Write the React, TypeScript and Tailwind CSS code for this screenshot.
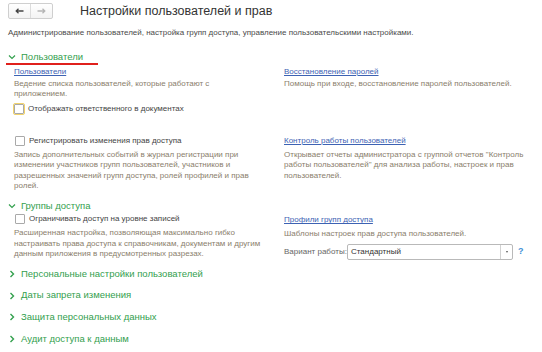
import React from "react";

const green = "text-[#33a04e]";
const desc = "text-[8px] leading-[10.4px] text-[#8a7e6c]";
const link = "text-[8px] leading-[10px] text-[#3d62b3] underline";

function ChevronDown() {
  return (
    <svg width="8" height="6" viewBox="0 0 8 6" className="mr-[5px] shrink-0">
      <path d="M1 1.5 L4 4.5 L7 1.5" fill="none" stroke="#33a04e" strokeWidth="1.2" />
    </svg>
  );
}

function ChevronRight() {
  return (
    <svg width="6" height="8" viewBox="0 0 6 8" className="ml-[1px] mr-[6px] shrink-0">
      <path d="M1.5 1 L4.5 4 L1.5 7" fill="none" stroke="#33a04e" strokeWidth="1.4" />
    </svg>
  );
}

function Checkbox({ label, focused }: { label: string; focused?: boolean }) {
  return (
    <div className="flex h-[12px] items-center">
      <span
        className={`flex h-[12px] w-[12px] items-center justify-center rounded-[2px] ${
          focused ? "border border-[#f2d36b]" : ""
        }`}
      >
        <span className="h-[10px] w-[10px] rounded-[1px] border border-[#a9a9a9] bg-white" />
      </span>
      <span className="ml-[3px] text-[8px] text-[#444]">{label}</span>
    </div>
  );
}

function Collapsed({ title }: { title: string }) {
  return (
    <div className={`flex h-[21.8px] items-center text-[9.5px] ${green}`}>
      <ChevronRight />
      {title}
    </div>
  );
}

export default function App() {
  return (
    <div
      className="h-[352px] w-[542px] overflow-hidden bg-white"
      style={{ fontFamily: '"Liberation Sans", Arial, sans-serif' }}
    >
      <div className="flex items-center pl-[8px] pt-[3px]">
        <div className="flex h-[16px] w-[45px] rounded-[2px] border border-[#cfcfcf] bg-gradient-to-b from-white to-[#f3f3f3]">
          <div className="flex flex-1 items-center justify-center border-r border-[#dcdcdc]">
            <svg width="9" height="6" viewBox="0 0 9 6">
              <path d="M8.5 3 H1.5 M3.5 0.8 L1.2 3 L3.5 5.2" fill="none" stroke="#444" strokeWidth="1.3" />
            </svg>
          </div>
          <div className="flex flex-1 items-center justify-center">
            <svg width="9" height="6" viewBox="0 0 9 6">
              <path d="M0.5 3 H7.5 M5.5 0.8 L7.8 3 L5.5 5.2" fill="none" stroke="#b5b5b5" strokeWidth="1.3" />
            </svg>
          </div>
        </div>
        <h1 className="ml-[27px] text-[12.5px] leading-[16px] text-[#333]">
          Настройки пользователей и прав
        </h1>
      </div>

      <p className="mt-[9px] pl-[8px] text-[8px] leading-[10px] text-[#4a4a4a]">
        Администрирование пользователей, настройка групп доступа, управление пользовательскими настройками.
      </p>

      <div className="mt-[13px] flex pl-[6px]">
        <div className={`flex h-[14px] w-[92px] items-center border-b-2 border-[#e0201c] pl-[2px] text-[9.5px] leading-[12px] ${green}`}>
          <ChevronDown />
          Пользователи
        </div>
      </div>

      <div className="grid grid-cols-[270px_1fr] pl-[14px]">
        <div className="pt-[2px]">
          <div className={link}>Пользователи</div>
          <p className={`mt-[2px] ${desc}`}>
            Ведение списка пользователей, которые работают с
            <br />
            приложением.
          </p>
          <div className="mt-[3px] -ml-[1px]">
            <Checkbox label="Отображать ответственного в документах" focused />
          </div>
        </div>
        <div className="pt-[2px]">
          <div className={link}>Восстановление паролей</div>
          <p className={`mt-[2px] ${desc}`}>
            Помощь при входе, восстановление паролей пользователей.
          </p>
        </div>
      </div>

      <div className="mt-[20px] grid grid-cols-[270px_1fr] pl-[14px]">
        <div>
          <Checkbox label="Регистрировать изменения прав доступа" />
          <p className={`mt-[3px] ${desc}`}>
            Запись дополнительных событий в журнал регистрации при
            <br />
            изменении участников групп пользователей, участников и
            <br />
            разрешенных значений групп доступа, ролей профилей и прав
            <br />
            ролей.
          </p>
        </div>
        <div className="pt-[1px]">
          <div className={link}>Контроль работы пользователей</div>
          <p className={`mt-[4px] ${desc}`}>
            Открывает отчеты администратора с группой отчетов "Контроль
            <br />
            работы пользователей" для анализа работы, настроек и прав
            <br />
            пользователей.
          </p>
        </div>
      </div>

      <div className={`mt-[9px] flex h-[12px] items-center pl-[8px] text-[9.5px] ${green}`}>
        <ChevronDown />
        Группы доступа
      </div>

      <div className="grid grid-cols-[270px_1fr] pl-[14px]">
        <div className="pt-[1px]">
          <Checkbox label="Ограничивать доступ на уровне записей" />
          <p className={`mt-[3px] ${desc}`}>
            Расширенная настройка, позволяющая максимально гибко
            <br />
            настраивать права доступа к справочникам, документам и другим
            <br />
            данным приложения в предусмотренных разрезах.
          </p>
        </div>
        <div className="pt-[3px]">
          <div className={link}>Профили групп доступа</div>
          <p className={`mt-[4px] ${desc}`}>
            Шаблоны настроек прав доступа пользователей.
          </p>
          <div className="mt-[4px] flex items-center">
            <span className="w-[63px] text-[8px] text-[#666]">Вариант работы:</span>
            <div className="flex h-[16px] w-[166px] rounded-[2px] border border-[#b9b9b9] bg-white">
              <span className="flex-1 pl-[3px] text-[8px] leading-[14px] text-[#333]">
                Стандартный
              </span>
              <span className="flex w-[12px] items-center justify-center border-l border-[#d2d2d2]">
                <span className="h-0 w-0 border-x-[1.5px] border-t-[2px] border-x-transparent border-t-[#555]" />
              </span>
            </div>
            <span className="ml-[5px] text-[9px] font-bold text-[#3d8fd6]">?</span>
          </div>
        </div>
      </div>

      <div className="mt-[3px] pl-[8px]">
        <Collapsed title="Персональные настройки пользователей" />
        <Collapsed title="Даты запрета изменения" />
        <Collapsed title="Защита персональных данных" />
        <Collapsed title="Аудит доступа к данным" />
      </div>
    </div>
  );
}
